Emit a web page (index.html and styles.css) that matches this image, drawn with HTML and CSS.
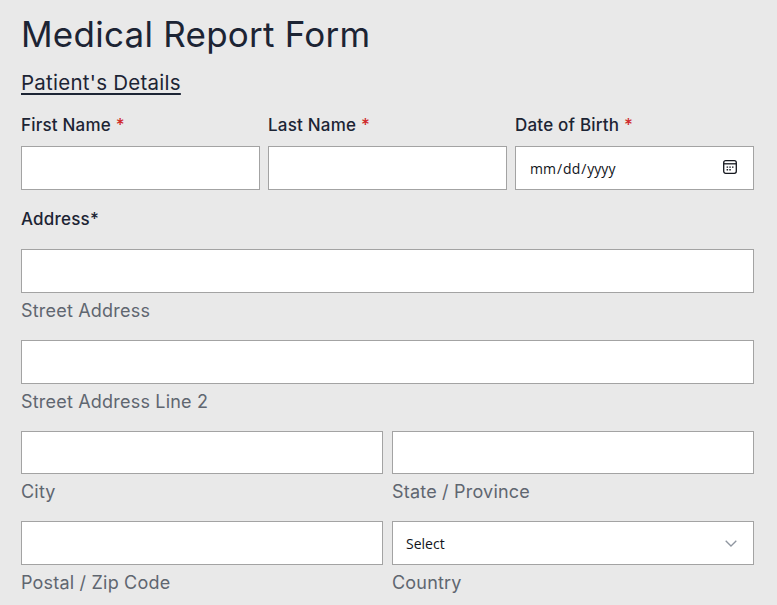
FILE: index.html
```html
<!DOCTYPE html>
<html lang="en">
<head>
<meta charset="utf-8">
<title>Medical Report Form</title>
<link rel="stylesheet" href="styles.css">
</head>
<body>
<form class="form">
  <h1 class="title">Medical Report Form</h1>
  <h2 class="section">Patient's Details</h2>
  <div class="row three">
    <div class="field">
      <label class="label" for="first">First Name <span class="req">*</span></label>
      <input class="input" id="first" type="text">
    </div>
    <div class="field">
      <label class="label" for="last">Last Name <span class="req">*</span></label>
      <input class="input" id="last" type="text">
    </div>
    <div class="field">
      <label class="label" for="dob">Date of Birth <span class="req">*</span></label>
      <div class="control">
        <input class="input date" id="dob" type="date">
        <svg class="calendar" width="14" height="14" viewBox="0 0 14 14" aria-hidden="true">
          <rect x=".7" y=".7" width="12.6" height="12.6" rx="2" fill="none" stroke="#14171e" stroke-width="1.3"/>
          <path d="M1 3.8h12" stroke="#14171e" stroke-width="1.3"/>
          <path d="M3.6 6.4h1.5v1.4H3.6zM6.3 6.4h1.5v1.4H6.3zM9 6.4h1.5v1.4H9zM3.6 9h1.5v1.4H3.6zM6.3 9h1.5v1.4H6.3z" fill="#14171e"/>
        </svg>
      </div>
    </div>
  </div>
  <div class="label address">Address*</div>
  <div class="stack">
    <div class="part">
      <input class="input" type="text" aria-label="Street Address">
      <span class="hint">Street Address</span>
    </div>
    <div class="part">
      <input class="input" type="text" aria-label="Street Address Line 2">
      <span class="hint">Street Address Line 2</span>
    </div>
    <div class="row two">
      <div class="part">
        <input class="input" type="text" aria-label="City">
        <span class="hint">City</span>
      </div>
      <div class="part">
        <input class="input" type="text" aria-label="State / Province">
        <span class="hint">State / Province</span>
      </div>
    </div>
    <div class="row two">
      <div class="part">
        <input class="input" type="text" aria-label="Postal / Zip Code">
        <span class="hint">Postal / Zip Code</span>
      </div>
      <div class="part">
        <div class="control">
          <select class="input select" aria-label="Country"><option>Select</option></select>
          <svg class="chevron" width="12" height="7" viewBox="0 0 12 7" aria-hidden="true"><path d="M.7.7 6 6l5.3-5.3" fill="none" stroke="#8f96a0" stroke-width="1.3"/></svg>
        </div>
        <span class="hint">Country</span>
      </div>
    </div>
  </div>
</form>
</body>
</html>
```
FILE: styles.css
```css
* { box-sizing: border-box; }
html, body { margin: 0; height: 100%; overflow: hidden; }
body {
  background: #e9e9e9;
  color: #1c2434;
  font-family: Inter, "Liberation Sans", sans-serif;
}
.form { padding: 14px 23px 0 21px; }
.title {
  margin: 0;
  font-size: 35px;
  line-height: 41px;
  font-weight: 400;
  letter-spacing: .25px;
}
.section {
  margin: 15px 0 0;
  font-size: 20.5px;
  line-height: 25px;
  font-weight: 400;
  letter-spacing: .25px;
  text-decoration: underline;
  text-underline-offset: 3px;
}
.row { display: grid; }
.three { grid-template-columns: repeat(3, 1fr); column-gap: 8px; margin-top: 19px; }
.two { grid-template-columns: repeat(2, 1fr); column-gap: 9px; }
.label {
  display: block;
  font-size: 17px;
  line-height: 22px;
  font-weight: 500;
  letter-spacing: .2px;
  height: 32px;
}
.req { color: #d02b2b; }
.address { margin-top: 18px; height: 41.6px; }
.input {
  display: block;
  width: 100%;
  height: 43.7px;
  border: 1px solid #a3a3a3;
  border-radius: 0;
  background: #fff;
  margin: 0;
  padding: 0 14px;
  font-family: "Open Sans", sans-serif;
  font-size: 14px;
  color: #10131a;
}
.date { padding-left: 13px; padding-top: 1px; }
.date::-webkit-calendar-picker-indicator { opacity: 0; }
.select { appearance: none; padding-left: 13px; padding-top: 1px; }
.control { position: relative; }
.calendar { position: absolute; right: 17px; top: 14px; pointer-events: none; }
.chevron { position: absolute; right: 17px; top: 19px; pointer-events: none; }
.stack { display: flex; flex-direction: column; gap: 18px; }
.part { display: flex; flex-direction: column; }
.hint {
  margin-top: 7px;
  font-size: 18px;
  line-height: 22px;
  letter-spacing: .2px;
  color: #5f6670;
}
```
